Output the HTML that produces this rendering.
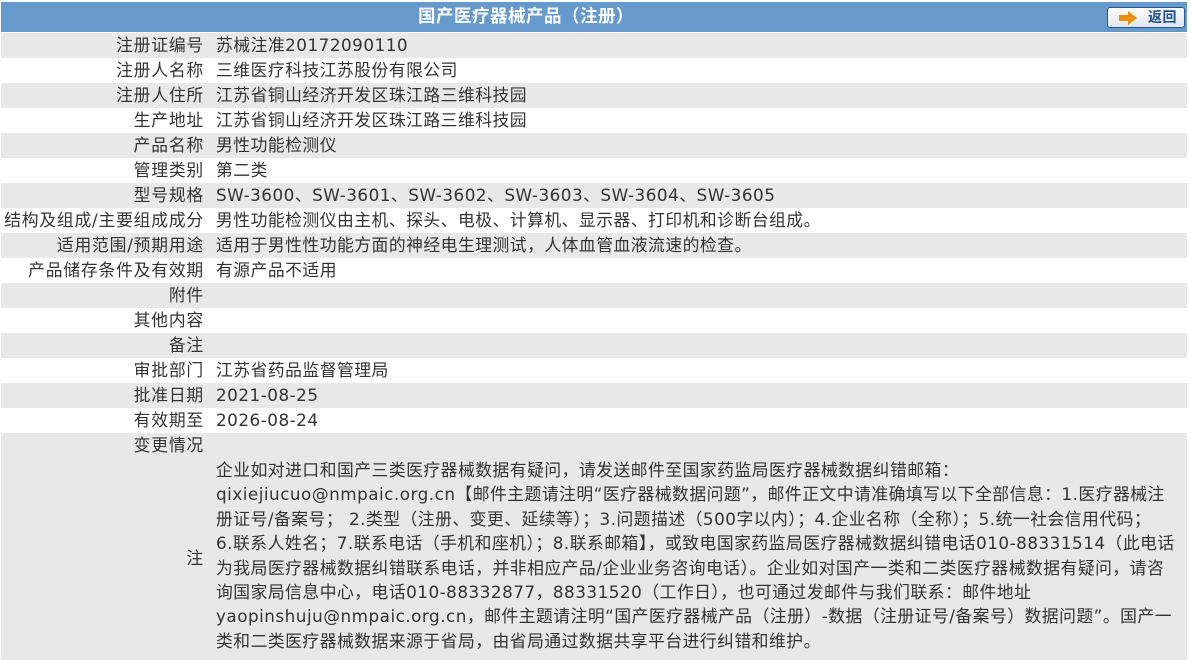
<!DOCTYPE html>
<html><head><meta charset="utf-8"><style>
body{margin:0;background:#fff;width:1191px;height:660px;overflow:hidden;font-family:"DejaVu Sans","Noto Sans CJK SC",sans-serif;font-size:16.8px;color:#333;letter-spacing:0.5px;}
.hd{position:absolute;left:1px;top:2px;width:1186px;height:30px;background:#6699cc;}
.ttl{position:absolute;left:370px;width:310px;top:0;line-height:30px;text-align:center;color:#fff;font-weight:bold;font-size:17.5px;}
.btn{position:absolute;left:1106px;top:5px;width:78px;height:21px;box-sizing:border-box;border:1px solid #2a5590;border-radius:3px;background:linear-gradient(#fff,#dfe6ee);}
.btn span{position:absolute;left:40px;top:0;line-height:19px;font-size:14px;font-weight:bold;color:#1f4e8c;font-family:"Noto Sans CJK SC",sans-serif;}
.r{position:absolute;left:1px;width:1186px;height:25px;line-height:25px;white-space:nowrap;}
.g{background:#e8e8e8;}
.l{position:absolute;right:983px;top:0;letter-spacing:0.8px;}
.v{position:absolute;left:215px;top:0;}
.note{position:absolute;left:216px;top:458px;width:972px;overflow:hidden;line-height:24.4px;white-space:nowrap;}
</style></head><body>
<div class="hd"><div class="ttl">国产医疗器械产品（注册）</div>
<div class="btn"><svg style="position:absolute;left:10px;top:3px" width="20" height="14"><path d="M1 4h9V0l9 7-9 7v-4H1z" fill="#f08c00"/></svg><span>返回</span></div></div>
<div class="r g" style="top:33px"><span class="l">注册证编号</span><span class="v">苏械注准20172090110</span></div>
<div class="r" style="top:58px"><span class="l">注册人名称</span><span class="v">三维医疗科技江苏股份有限公司</span></div>
<div class="r g" style="top:83px"><span class="l">注册人住所</span><span class="v">江苏省铜山经济开发区珠江路三维科技园</span></div>
<div class="r" style="top:108px"><span class="l">生产地址</span><span class="v">江苏省铜山经济开发区珠江路三维科技园</span></div>
<div class="r g" style="top:133px"><span class="l">产品名称</span><span class="v">男性功能检测仪</span></div>
<div class="r" style="top:158px"><span class="l">管理类别</span><span class="v">第二类</span></div>
<div class="r g" style="top:183px"><span class="l">型号规格</span><span class="v">SW-3600、SW-3601、SW-3602、SW-3603、SW-3604、SW-3605</span></div>
<div class="r" style="top:208px"><span class="l">结构及组成/主要组成成分</span><span class="v">男性功能检测仪由主机、探头、电极、计算机、显示器、打印机和诊断台组成。</span></div>
<div class="r g" style="top:233px"><span class="l">适用范围/预期用途</span><span class="v">适用于男性性功能方面的神经电生理测试，人体血管血液流速的检查。</span></div>
<div class="r" style="top:258px"><span class="l">产品储存条件及有效期</span><span class="v">有源产品不适用</span></div>
<div class="r g" style="top:283px"><span class="l">附件</span></div>
<div class="r" style="top:308px"><span class="l">其他内容</span></div>
<div class="r g" style="top:333px"><span class="l">备注</span></div>
<div class="r" style="top:358px"><span class="l">审批部门</span><span class="v">江苏省药品监督管理局</span></div>
<div class="r g" style="top:383px"><span class="l">批准日期</span><span class="v">2021-08-25</span></div>
<div class="r" style="top:408px"><span class="l">有效期至</span><span class="v">2026-08-24</span></div>
<div class="r g" style="top:433px;height:227px"><span class="l">变更情况</span><span class="l" style="top:113px">注</span></div>
<div class="note">企业如对进口和国产三类医疗器械数据有疑问，请发送邮件至国家药监局医疗器械数据纠错邮箱：<br>qixiejiucuo@nmpaic.org.cn【邮件主题请注明“医疗器械数据问题”，邮件正文中请准确填写以下全部信息：1.医疗器械注<br>册证号/备案号； 2.类型（注册、变更、延续等）；3.问题描述（500字以内）；4.企业名称（全称）；5.统一社会信用代码；<br>6.联系人姓名；7.联系电话（手机和座机）；8.联系邮箱】，或致电国家药监局医疗器械数据纠错电话010-88331514（此电话<br>为我局医疗器械数据纠错联系电话，并非相应产品/企业业务咨询电话）。企业如对国产一类和二类医疗器械数据有疑问，请咨<br>询国家局信息中心，电话010-88332877，88331520（工作日），也可通过发邮件与我们联系：邮件地址<br>yaopinshuju@nmpaic.org.cn，邮件主题请注明“国产医疗器械产品（注册）-数据（注册证号/备案号）数据问题”。国产一<br>类和二类医疗器械数据来源于省局，由省局通过数据共享平台进行纠错和维护。</div>
</body></html>
